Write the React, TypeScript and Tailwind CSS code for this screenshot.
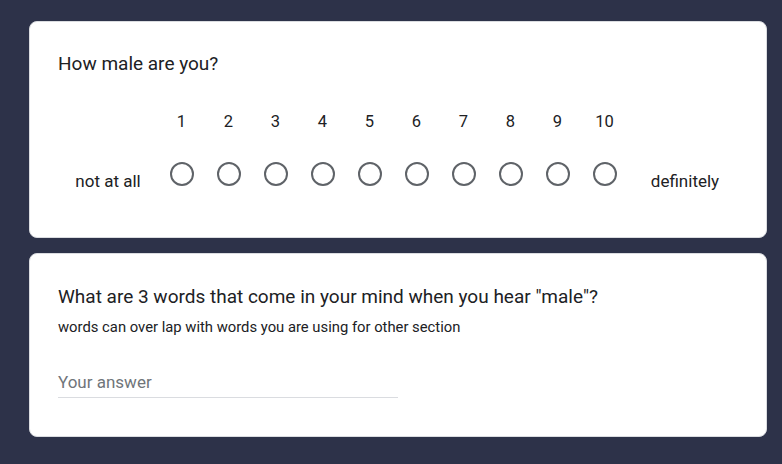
const scale = [1, 2, 3, 4, 5, 6, 7, 8, 9, 10];

export default function App() {
  return (
    <div
      className="w-[782px] h-[464px] bg-[#2d3249] pt-[21px] pl-[29px] pr-[15px] flex flex-col gap-[15px]"
      style={{ fontFamily: "Roboto, Arial, sans-serif" }}
    >
      {/* Linear scale question */}
      <div className="h-[217px] bg-white rounded-lg border border-[#dadce0] px-[28px] pt-[30px]">
        <div className="text-[19px] leading-[24px] text-[#202124]">How male are you?</div>

        <div className="mt-[36px] flex items-start">
          <div className="w-[100px] mt-[59px] text-center text-[17px] leading-[20px] text-[#202124]">
            not at all
          </div>
          {scale.map((n) => (
            <div key={n} className="w-[47px] flex flex-col items-center">
              <div className="h-[20px] leading-[20px] text-[16.5px] text-[#202124]">{n}</div>
              <div className="mt-[30px] w-[24px] h-[24px] rounded-full border-2 border-[#5f6368]" />
            </div>
          ))}
          <div className="flex-1 mt-[59px] pl-[4px] text-center text-[17px] leading-[20px] text-[#202124]">
            definitely
          </div>
        </div>
      </div>

      {/* Short answer question */}
      <div className="h-[184px] bg-white rounded-lg border border-[#dadce0] px-[28px] pt-[31px]">
        <div className="text-[19px] leading-[24px] text-[#202124]">
          What are 3 words that come in your mind when you hear "male"?
        </div>
        <div className="mt-[8px] text-[14.8px] leading-[20px] text-[#202124]">
          words can over lap with words you are using for other section
        </div>
        <div className="mt-[35px] w-[340px] border-b border-[#dadce0] pb-[5px]">
          <div className="text-[17px] leading-[20px] text-[#70757a]">Your answer</div>
        </div>
      </div>
    </div>
  );
}
